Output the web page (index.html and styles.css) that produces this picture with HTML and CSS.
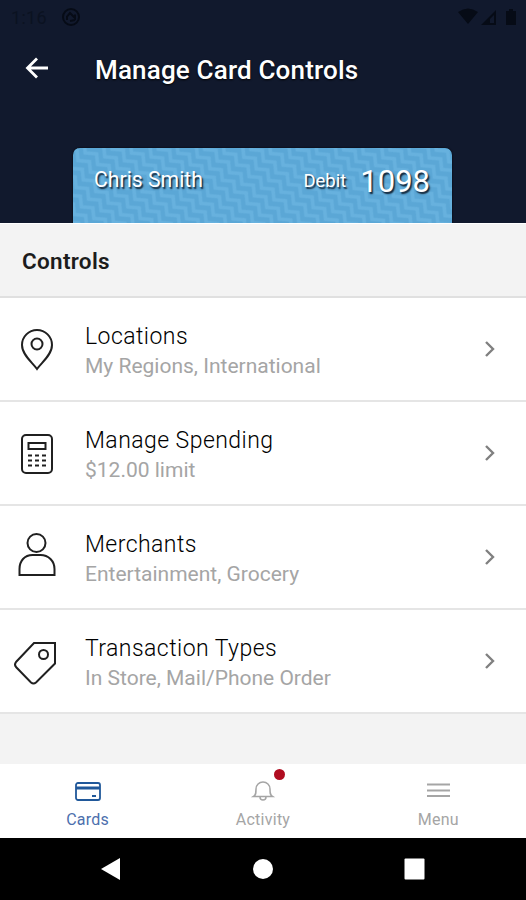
FILE: index.html
```html
<!DOCTYPE html>
<html lang="en">
<head>
<meta charset="utf-8">
<title>Manage Card Controls</title>
<link rel="stylesheet" href="styles.css">
</head>
<body>
<header class="hero">
  <div class="status">
    <span class="time">1:16</span>
    <svg class="sync" width="20" height="20" viewBox="0 0 20 20"><circle cx="10" cy="10" r="8" fill="none" stroke="currentColor" stroke-width="2"/><path d="M6 13V9.500L9 6l5 5V7.500M9 14l5-1" fill="none" stroke="currentColor" stroke-width="2"/></svg>
    <svg class="signals" width="60" height="18" viewBox="0 0 60 18"><path d="M0 4Q10-3 20 4L10 16ZM23 17 38 2v15Zm9-2h4V7l-4 4ZM48 3h3V1h4v2h3v14H48Z" fill="currentColor" fill-rule="evenodd"/></svg>
  </div>
  <div class="appbar">
    <svg class="back" width="24" height="24" viewBox="0 0 24 24"><path d="M13 2.500 3.500 12l9.500 9.500M3.500 12H24" fill="none" stroke="#fff" stroke-width="2.800"/></svg>
    <h1>Manage Card Controls</h1>
  </div>
  <div class="card">
    <svg class="texture" width="380" height="76">
      <defs><pattern id="zigzag" width="17" height="10.500" patternUnits="userSpaceOnUse" patternTransform="translate(4 2) rotate(43)">
        <path d="M-9-14 0-21 8-14 17-21 25-14M-9-3.500 0-10.500 8-3.500 17-10.500 25-3.500M-9 7 0 0 8 7 17 0 25 7M-9 17.500 0 10.500 8 17.500 17 10.500 25 17.500" fill="none" stroke="#67b1de" stroke-width="3.500"/>
      </pattern></defs>
      <rect width="380" height="76" fill="#5ba7d6"/><rect width="380" height="76" fill="url(#zigzag)"/>
    </svg>
    <span class="holder">Chris Smith</span><span class="kind">Debit</span><span class="digits">1098</span>
  </div>
</header>
<main>
  <h2>Controls</h2>
  <ul class="list">
    <li>
      <svg class="icon" width="44" height="44" viewBox="0 0 44 44"><path d="M23 42C19 36 8 28 8 18a15 15 0 0 1 30 0C38 28 27 36 23 42Z"/><circle cx="23" cy="17" r="5.500"/></svg>
      <div class="copy"><b>Locations</b><span>My Regions, International</span></div>
      <svg class="chevron" width="12" height="18" viewBox="0 0 12 18"><path d="m2 2 7 7-7 7"/></svg>
    </li>
    <li>
      <svg class="icon" width="44" height="44" viewBox="0 0 44 44"><rect x="8" y="4" width="30" height="38" rx="4"/><path d="M14.500 12h17v6h-17z"/><path d="M14 24.500h18M14 29.500h18M14 34.500h18" stroke-dasharray="4 3"/></svg>
      <div class="copy"><b>Manage Spending</b><span>$12.00 limit</span></div>
      <svg class="chevron" width="12" height="18" viewBox="0 0 12 18"><path d="m2 2 7 7-7 7"/></svg>
    </li>
    <li>
      <svg class="icon person" width="44" height="44" viewBox="0 0 44 44"><circle cx="22.500" cy="10" r="9"/><path d="M5.500 42V36c0-8 5-14 13-14h8c8 0 14 6 14 14v6Z"/></svg>
      <div class="copy"><b>Merchants</b><span>Entertainment, Grocery</span></div>
      <svg class="chevron" width="12" height="18" viewBox="0 0 12 18"><path d="m2 2 7 7-7 7"/></svg>
    </li>
    <li>
      <svg class="icon tag" width="44" height="44" viewBox="0 0 44 44"><path d="M20 4h21V24.500L22 43.500q-2.500 2-5 0L2 28q-2-2.500 0-5Z"/><circle cx="29.500" cy="15.500" r="4.500"/></svg>
      <div class="copy"><b>Transaction Types</b><span>In Store, Mail/Phone Order</span></div>
      <svg class="chevron" width="12" height="18" viewBox="0 0 12 18"><path d="m2 2 7 7-7 7"/></svg>
    </li>
  </ul>
</main>
<nav class="tabs">
  <div class="tab active"><svg width="28" height="24" viewBox="0 0 28 24"><rect x="2" y="3" width="24" height="17" rx="2" fill="none" stroke="currentColor" stroke-width="1.800"/><path d="M2 8h24" stroke="currentColor" stroke-width="3"/><path d="M18 16h4" stroke="currentColor" stroke-width="2"/></svg><span>Cards</span></div>
  <div class="tab"><svg width="28" height="24" viewBox="0 0 28 24"><path d="M4.500 16.500C7 15 7 13 7 9a7 7 0 0 1 14 0c0 4 0 6 2.500 7.500ZM11 17a3 3 0 0 0 6 0" fill="none" stroke="currentColor" stroke-width="1.500"/></svg><i class="badge"></i><span>Activity</span></div>
  <div class="tab"><svg width="28" height="24" viewBox="0 0 28 24"><path d="M3 4.500h23M3 10.500h23M3 16h23" stroke="currentColor" stroke-width="2"/></svg><span>Menu</span></div>
</nav>
<div class="system">
  <svg width="22" height="24" viewBox="0 0 22 24"><path d="M1 12 20 1v22Z" fill="#fff"/></svg>
  <svg width="22" height="24" viewBox="0 0 22 24"><circle cx="11" cy="12" r="10" fill="#fff"/></svg>
  <svg width="22" height="24" viewBox="0 0 22 24"><rect x="1.500" y="1.500" width="20" height="21" rx="1" fill="#fff"/></svg>
</div>
</body>
</html>
```
FILE: styles.css
```css
* { box-sizing: border-box; }
body { margin: 0; width: 526px; height: 900px; display: flex; flex-direction: column; overflow: hidden; background: #f3f3f3; font-family: Roboto, "Liberation Sans", sans-serif; }
svg { display: block; flex: none; }
.hero { height: 223px; background: #11192d; flex: none; overflow: hidden; }
.status { height: 34px; padding: 0 8px 0 11px; display: flex; align-items: center; color: #060b16; }
.time { width: 50px; font-size: 18px; letter-spacing: .3px; color: #0b1221; }
.signals { margin-left: auto; }
.appbar { height: 114px; display: flex; padding: 22px 0 0 24px; }
h1 { margin: 0 0 0 47px; font-size: 26px; letter-spacing: .17px; line-height: 29px; font-weight: 500; color: #fff; white-space: nowrap; text-shadow: 0 1px 2px #000; }
.card { position: relative; width: 379px; height: 75px; margin-left: 73px; padding: 0 22px 9px 21px; display: flex; align-items: center; border-radius: 7px 7px 0 0; overflow: hidden; color: #fff; text-shadow: 1.5px 1.5px 1.5px #102234; box-shadow: 0 0 2px #000; white-space: nowrap; }
.texture { position: absolute; inset: 0; }
.holder, .kind, .digits { position: relative; }
.holder { font-size: 21.200px; margin-top: -3px; }
.kind { margin-left: auto; font-size: 18.500px; margin-top: -1px; }
.digits { margin-left: 14px; font-size: 31px; }
main { flex: none; height: 541px; border-top: 1px solid #fff; }
h2 { margin: 0; height: 72px; padding: 22px; font-size: 22.500px; letter-spacing: .3px; line-height: 30px; font-weight: 600; color: #1c1c1c; }
.list { list-style: none; margin: 0; padding: 0; border-top: 2px solid #e0e0e0; background: #fff; }
.list li { height: 104px; border-bottom: 2px solid #e5e5e5; display: flex; align-items: center; padding: 0 30px 0 14px; }
.icon { fill: none; stroke: #202020; stroke-width: 2; overflow: visible; }
.person { margin-top: -4px; }
.copy { margin: 4px 0 0 27px; display: flex; flex-direction: column; white-space: nowrap; align-items: flex-start; }
.copy b { font-size: 23px; line-height: 31px; font-weight: 300; letter-spacing: .45px; color: #000; }
.copy span { font-size: 21px; line-height: 29px; font-weight: 400; color: #a5a5a5; }
.chevron { margin: 0 0 0 auto; fill: none; stroke: #808080; stroke-width: 2.400; }
.tabs { height: 74px; flex: none; display: grid; grid-template-columns: 1fr 1fr 1fr; background: #fff; }
.tab { position: relative; display: flex; flex-direction: column; align-items: center; padding-top: 16px; color: #a5a5a5; font-size: 16px; line-height: 24px; letter-spacing: .25px; }
.tab span { margin-top: 4px; }
.active { color: #4c6fad; }
.active svg { color: #20589a; }
.badge { position: absolute; left: 98.500px; top: 5px; width: 11px; height: 11px; border-radius: 50%; background: #b00c20; }
.system { flex: 1; background: #000; display: flex; padding: 19px 101px 0 100px; justify-content: space-between; }
```
